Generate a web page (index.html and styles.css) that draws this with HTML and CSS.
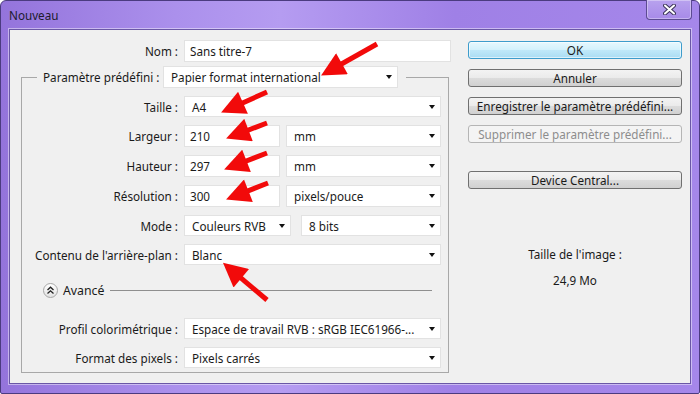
FILE: index.html
```html
<!DOCTYPE html>
<html lang="fr">

<head>
    <meta charset="UTF-8">
    <meta name="viewport" content="width=device-width, initial-scale=1.0">
    <title>Nouveau</title>
    <link rel="stylesheet" href="styles.css">
</head>

<body>
    <div class="window">
        <!-- Title bar -->
        <div class="titlebar">
            <span class="title">Nouveau</span>
            <div class="close">
                <svg width="13" height="11" viewBox="0 0 13 11">
                    <path d="M2 1.5 L11 9.5 M11 1.5 L2 9.5" stroke="#3b3458" stroke-width="4" stroke-linecap="round" />
                    <path d="M2 1.5 L11 9.5 M11 1.5 L2 9.5" stroke="#ffffff" stroke-width="2" stroke-linecap="round" />
                </svg>
            </div>
        </div>

        <div class="client">
            <!-- Left form -->
            <div class="left">
                <div class="row name-row">
                    <span class="lbl">Nom :</span>
                    <div class="field input w-name">Sans titre-7</div>
                </div>

                <fieldset class="group">
                    <legend class="preset">
                        <span class="lbl-preset">Paramètre prédéfini :</span><div class="field select w-preset"><span>Papier format international</span><i class="caret"></i></div>
                    </legend>

                    <div class="row first">
                        <span class="lbl">Taille :</span>
                        <div class="field select w-full"><span>A4</span><i class="caret"></i></div>
                    </div>
                    <div class="row tall">
                        <span class="lbl">Largeur :</span>
                        <div class="field input w-num">210</div>
                        <div class="field select w-unit"><span>mm</span><i class="caret"></i></div>
                    </div>
                    <div class="row tall">
                        <span class="lbl">Hauteur :</span>
                        <div class="field input w-num">297</div>
                        <div class="field select w-unit"><span>mm</span><i class="caret"></i></div>
                    </div>
                    <div class="row tall">
                        <span class="lbl">Résolution :</span>
                        <div class="field input w-num">300</div>
                        <div class="field select w-unit"><span>pixels/pouce</span><i class="caret"></i></div>
                    </div>
                    <div class="row">
                        <span class="lbl">Mode :</span>
                        <div class="field select w-mode"><span>Couleurs RVB</span><i class="caret"></i></div>
                        <div class="field select w-bits"><span>8 bits</span><i class="caret"></i></div>
                    </div>
                    <div class="row">
                        <span class="lbl">Contenu de l'arrière-plan :</span>
                        <div class="field select w-full"><span>Blanc</span><i class="caret"></i></div>
                    </div>

                    <!-- Advanced toggle -->
                    <div class="advanced">
                        <span class="toggle">
                            <svg width="9" height="9" viewBox="0 0 9 9">
                                <path d="M1.5 4 L4.5 1.2 L7.5 4 M1.5 7.6 L4.5 4.8 L7.5 7.6" fill="none" stroke="#222" stroke-width="1.3" />
                            </svg>
                        </span>
                        <span class="adv-text">Avancé</span>
                        <span class="adv-line"></span>
                    </div>

                    <div class="row adv-row">
                        <span class="lbl">Profil colorimétrique :</span>
                        <div class="field select w-full"><span>Espace de travail RVB : sRGB IEC61966-...</span><i class="caret"></i></div>
                    </div>
                    <div class="row">
                        <span class="lbl">Format des pixels :</span>
                        <div class="field select w-full"><span>Pixels carrés</span><i class="caret"></i></div>
                    </div>
                </fieldset>
            </div>

            <!-- Right buttons -->
            <div class="right">
                <div class="btn default">OK</div>
                <div class="btn">Annuler</div>
                <div class="btn">Enregistrer le paramètre prédéfini...</div>
                <div class="btn disabled">Supprimer le paramètre prédéfini...</div>
                <div class="btn device">Device Central...</div>
                <div class="size-info">
                    <p>Taille de l'image :</p>
                    <p>24,9 Mo</p>
                </div>
            </div>
        </div>

        <!-- Red annotation arrows drawn over the dialog -->
        <svg class="arrows" width="700" height="394" viewBox="0 0 700 394">
            <defs>
                <marker id="head" viewBox="0 0 10 10" markerWidth="5.2" markerHeight="4.8" refX="3" refY="5" orient="auto">
                    <path d="M0,0 L10,5 L0,10 z" fill="#f20a0a" />
                </marker>
            </defs>
            <g stroke="#f20a0a" stroke-width="5" marker-end="url(#head)">
                <line x1="377" y1="44" x2="335.7" y2="67.2" />
                <line x1="267" y1="92" x2="236.4" y2="105.7" />
                <line x1="267" y1="123" x2="241.8" y2="132.6" />
                <line x1="267" y1="153" x2="239.8" y2="163.5" />
                <line x1="268" y1="183" x2="241.7" y2="193.4" />
                <line x1="267" y1="300" x2="235.8" y2="273.6" />
            </g>
        </svg>
    </div>
</body>

</html>
```

FILE: styles.css
```css
body {
    margin: 0;
    padding: 0;
    font-family: "Noto Sans", "Liberation Sans", sans-serif;
    font-size: 11.7px;
    color: #1a1a1a;
}

.window {
    position: relative;
    width: 700px;
    height: 394px;
    box-sizing: border-box;
    padding: 0 8px 9px 8px;
    display: flex;
    flex-direction: column;
    background: linear-gradient(90deg, #9474dc 0%, #ab90ec 25%, #b59cf1 40%, #9f80e6 65%, #a587ea 100%);
    border: 1px solid #4b3b80;
    border-radius: 6px 6px 2px 2px;
}

.titlebar {
    height: 28px;
    display: flex;
    align-items: flex-start;
    justify-content: space-between;
}

.title {
    margin-top: 6px;
    color: #1d1b2e;
}

.close {
    width: 46px;
    height: 20px;
    margin-top: -1px;
    margin-right: -1px;
    box-sizing: border-box;
    border: 1px solid #5c4b92;
    border-top: none;
    border-radius: 0 0 4px 4px;
    background: linear-gradient(#b8a2ee, #a78ae8);
    box-shadow: inset 0 0 0 1px rgba(255, 255, 255, 0.35);
    display: flex;
    align-items: center;
    justify-content: center;
}

.client {
    flex: 1;
    display: flex;
    background-color: #f0f0f0;
    border: 1px solid #6a57a6;
    box-shadow: 0 0 0 1px rgba(255, 255, 255, 0.45);
    padding: 10px 0 0 11px;
}

.left {
    width: 428px;
}

.row {
    display: flex;
    align-items: center;
    height: 21px;
    margin-top: 8px;
}

.row.first {
    margin-top: 8px;
}

.row.tall {
    height: 22px;
}

.name-row {
    margin-top: 0;
    height: 22px;
}

.lbl {
    width: 156px;
    flex: none;
    text-align: right;
    margin-right: 6px;
    white-space: nowrap;
}

.name-row .lbl {
    width: 157px;
}

.field {
    height: 100%;
    box-sizing: border-box;
    background: #fff;
    border: 1px solid #e2e2e2;
    display: flex;
    align-items: center;
    flex: none;
    white-space: nowrap;
    overflow: hidden;
}

.field.input {
    padding-left: 5px;
}

.field.select {
    padding-left: 7px;
    padding-right: 5px;
    justify-content: space-between;
}

.caret {
    flex: none;
    width: 0;
    height: 0;
    border-left: 3.5px solid transparent;
    border-right: 3.5px solid transparent;
    border-top: 4px solid #111;
}

.w-name { width: 267px; }
.w-preset { width: 235px; height: 22px; }
.w-full { width: 257px; }
.w-num { width: 96px; }
.w-unit { width: 155px; margin-left: 6px; }
.w-mode { width: 107px; }
.w-bits { width: 140px; margin-left: 10px; }

/* group box with the preset on its border */
.group {
    margin: 4px 0 0 0;
    padding: 0 0 4px 0;
    border: 1px solid #a8a8a8;
    box-sizing: border-box;
    width: 428px;
}

.preset {
    margin-left: 15px;
    padding: 0 8px 0 6px;
    height: 22px;
}

.lbl-preset {
    display: inline-block;
    width: 116px;
    margin-right: 4px;
    text-align: right;
    white-space: nowrap;
    vertical-align: middle;
}

.preset .field {
    display: inline-flex;
    vertical-align: middle;
}

.advanced {
    display: flex;
    align-items: center;
    height: 16px;
    margin-top: 17px;
    padding-left: 21px;
}

.toggle {
    width: 15px;
    height: 15px;
    box-sizing: border-box;
    border: 1px solid #a7a7a7;
    border-radius: 50%;
    background: linear-gradient(#ffffff, #e2e2e2);
    display: flex;
    align-items: center;
    justify-content: center;
}

.adv-text {
    margin-left: 5px;
    font-size: 12.3px;
}

.adv-line {
    width: 322px;
    margin-left: 6px;
    border-top: 1px solid #8f8f8f;
}

.adv-row {
    margin-top: 20px;
}

/* right column */
.right {
    width: 214px;
    margin-left: 19px;
    padding-top: 1px;
}

.btn {
    height: 18px;
    box-sizing: border-box;
    margin-bottom: 10px;
    border: 1px solid #707070;
    border-radius: 3px;
    background: linear-gradient(#f3f3f3 0%, #ebebeb 48%, #dcdcdc 52%, #d0d0d0 100%);
    display: flex;
    align-items: center;
    justify-content: center;
    white-space: nowrap;
}

.btn.default {
    border-color: #3d9ccc;
    background: linear-gradient(#e6f8fe 0%, #d2f1fc 48%, #bfe8f9 52%, #aadcf3 100%);
    box-shadow: inset 0 0 0 1px rgba(255, 255, 255, 0.6);
}

.btn.disabled {
    color: #8d8d8d;
    border-color: #b5b5b5;
    background: #f4f4f4;
}

.btn.device {
    margin-top: 28px;
}

.size-info {
    margin-top: 52px;
    text-align: center;
}

.size-info p {
    margin: 0;
    line-height: 26px;
}

.arrows {
    position: absolute;
    left: -1px;
    top: -1px;
    pointer-events: none;
}
```
